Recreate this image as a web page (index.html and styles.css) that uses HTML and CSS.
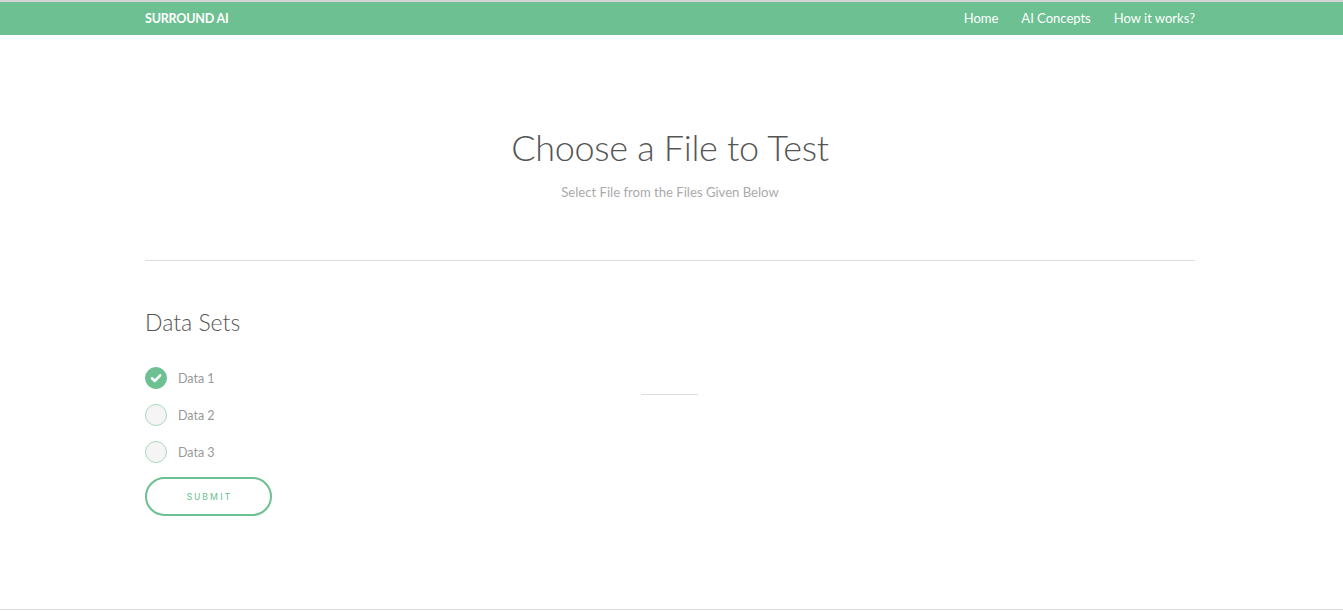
FILE: index.html
```html
<!DOCTYPE html>
<html lang="en">
<head>
<meta charset="utf-8">
<title>Surround AI</title>
<link rel="stylesheet" href="styles.css">
</head>
<body>
<header class="topbar">
  <div class="container nav-inner">
    <a class="brand" href="#">SURROUND AI</a>
    <nav class="nav-links">
      <a href="#">Home</a>
      <a href="#">AI Concepts</a>
      <a href="#">How it works?</a>
    </nav>
  </div>
</header>
<main class="container">
  <section class="hero">
    <h1>Choose a File to Test</h1>
    <p>Select File from the Files Given Below</p>
  </section>
  <hr class="divider">
  <section class="datasets">
    <div class="col-left">
      <h2>Data Sets</h2>
      <ul class="radio-list">
        <li class="radio checked"><span class="dot"><svg viewBox="0 0 22 22" width="22" height="22"><path d="M6.5 11.3 L9.6 14.3 L15.6 8.2" fill="none" stroke="#fff" stroke-width="2.8" stroke-linecap="round" stroke-linejoin="round"/></svg></span><span class="lbl">Data 1</span></li>
        <li class="radio"><span class="dot"></span><span class="lbl">Data 2</span></li>
        <li class="radio"><span class="dot"></span><span class="lbl">Data 3</span></li>
      </ul>
      <button class="submit" type="button">SUBMIT</button>
    </div>
    <div class="col-mid"><span class="short-rule"></span></div>
  </section>
</main>
<footer class="bottom-line"></footer>
</body>
</html>
```
FILE: styles.css
```css
* { box-sizing: border-box; }
html, body { margin: 0; padding: 0; }
body {
  font-family: "Source Sans Pro", Lato, "Open Sans", sans-serif;
  background: #fff;
  color: #555;
  height: 611px;
  display: flex;
  flex-direction: column;
}
.container {
  width: 1050px;
  margin: 0 auto;
  position: relative;
  left: -1.5px;
}
.topbar {
  background: #6cc091;
  border-top: 2px solid #d4d4d4;
  height: 35px;
}
.nav-inner {
  display: flex;
  justify-content: space-between;
  align-items: center;
  height: 32px;
}
.brand {
  color: #fff;
  font-weight: 700;
  font-size: 12.5px;
  text-decoration: none;
  letter-spacing: -0.2px;
}
.nav-links { display: flex; gap: 23px; }
.nav-links a {
  color: #fff;
  font-size: 13px;
  text-decoration: none;
}
main { flex: 1; }
.hero { text-align: center; padding-top: 89px; }
.hero h1 {
  margin: 0;
  font-weight: 300;
  font-size: 36px;
  line-height: 46px;
  color: #555;
  letter-spacing: -0.3px;
}
.hero p {
  margin: 14px 0 0;
  font-size: 13.1px;
  color: #aaa;
}
.divider {
  border: 0;
  border-top: 1px solid #dcdcdc;
  margin: 60px 0 0;
}
.datasets { display: flex; padding-top: 47px; }
.col-left { width: 350px; }
.col-mid { padding-top: 86px; padding-left: 146px; }
.short-rule { display: block; width: 57px; border-top: 1px solid #dcdcdc; height: 0; }
.datasets h2 {
  margin: 0;
  font-weight: 300;
  font-size: 23px;
  line-height: 28px;
  color: #555;
}
.radio-list { list-style: none; margin: 31px 0 0; padding: 0; display: flex; flex-direction: column; gap: 15px; }
.radio { display: flex; align-items: center; height: 22px; }
.dot {
  width: 22px; height: 22px; border-radius: 50%;
  background: #f4f5f4; border: 1px solid #a9d9bd;
  display: inline-flex; align-items: center; justify-content: center;
}
.radio.checked .dot { background: #6cc091; border-color: #6cc091; }
.dot svg { display: block; }
.lbl { margin-left: 11px; font-size: 12.5px; color: #999; }
.submit {
  margin-top: 14px;
  width: 127px; height: 39px;
  border: 2.5px solid #6cc091; border-radius: 20px;
  background: #fff;
  color: #6cc091;
  font-family: Roboto, "Open Sans", sans-serif;
  font-size: 9px;
  letter-spacing: 2.2px;
  padding: 0 0 0 2px;
}
.bottom-line { height: 2px; border-top: 1px solid #dcdcdc; }
```
